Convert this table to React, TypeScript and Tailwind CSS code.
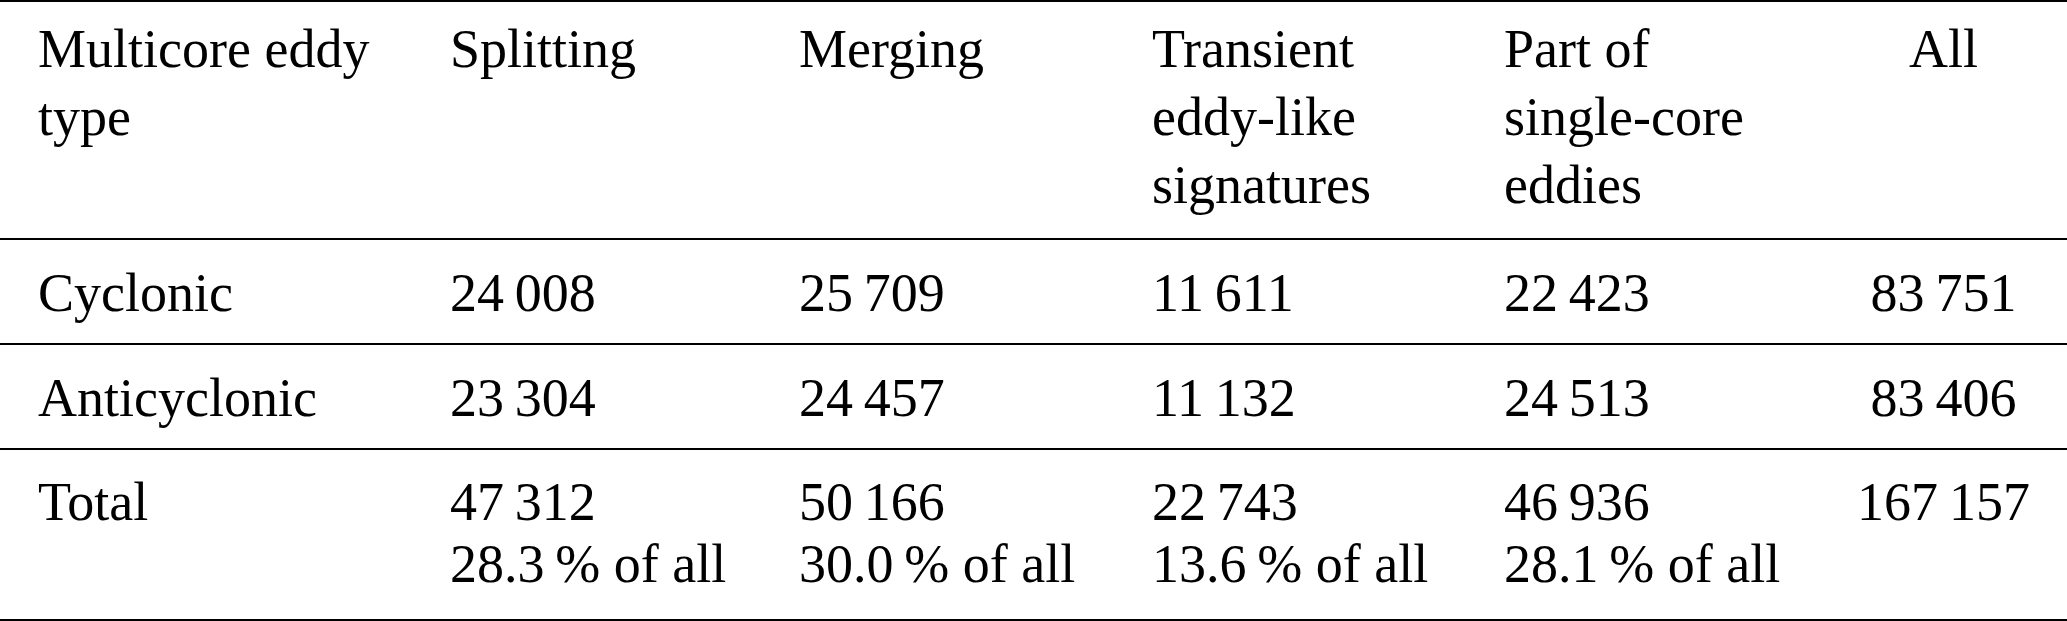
const thin = "\u2009";

type Row = { label: string; cells: string[][]; all: string };

const rows: Row[] = [
  { label: "Cyclonic", cells: [["24" + thin + "008"], ["25" + thin + "709"], ["11" + thin + "611"], ["22" + thin + "423"]], all: "83" + thin + "751" },
  { label: "Anticyclonic", cells: [["23" + thin + "304"], ["24" + thin + "457"], ["11" + thin + "132"], ["24" + thin + "513"]], all: "83" + thin + "406" },
  {
    label: "Total",
    cells: [
      ["47" + thin + "312", "28.3" + thin + "% of all"],
      ["50" + thin + "166", "30.0" + thin + "% of all"],
      ["22" + thin + "743", "13.6" + thin + "% of all"],
      ["46" + thin + "936", "28.1" + thin + "% of all"],
    ],
    all: "167" + thin + "157",
  },
];

// six tracks; the last one is centred on the totals column
const cols = "grid grid-cols-[450px_349px_353px_352px_316px_1fr] border-b-2 border-black";

export default function App() {
  return (
    <div
      className="w-[2067px] h-[621px] bg-white text-black text-[54px] overflow-hidden"
      style={{ fontFamily: '"Liberation Serif", "Times New Roman", serif' }}
    >
      <div className="border-t-2 border-black">
        {/* header */}
        <div className={`${cols} leading-[68px] pt-[13px] pb-[19px]`}>
          <div className="pl-[38px]">
            Multicore eddy
            <br />
            type
          </div>
          <div>Splitting</div>
          <div>Merging</div>
          <div>
            Transient
            <br />
            eddy-like
            <br />
            signatures
          </div>
          <div>
            Part of
            <br />
            single-core
            <br />
            eddies
          </div>
          <div className="text-center">All</div>
        </div>

        {rows.map((r) => {
          const last = r.label === "Total";
          return (
            <div
              key={r.label}
              className={`${cols} ${last ? "leading-[62px] pt-[21px] pb-[24px]" : "leading-[66px] pt-[20px] pb-[17px]"}`}
            >
              <div className="pl-[38px]">{r.label}</div>
              {r.cells.map((c, i) => (
                <div key={i} className="whitespace-nowrap">
                  {c.map((line, j) => (
                    <div key={j}>{line}</div>
                  ))}
                </div>
              ))}
              <div className="text-center whitespace-nowrap">{r.all}</div>
            </div>
          );
        })}
      </div>
    </div>
  );
}
